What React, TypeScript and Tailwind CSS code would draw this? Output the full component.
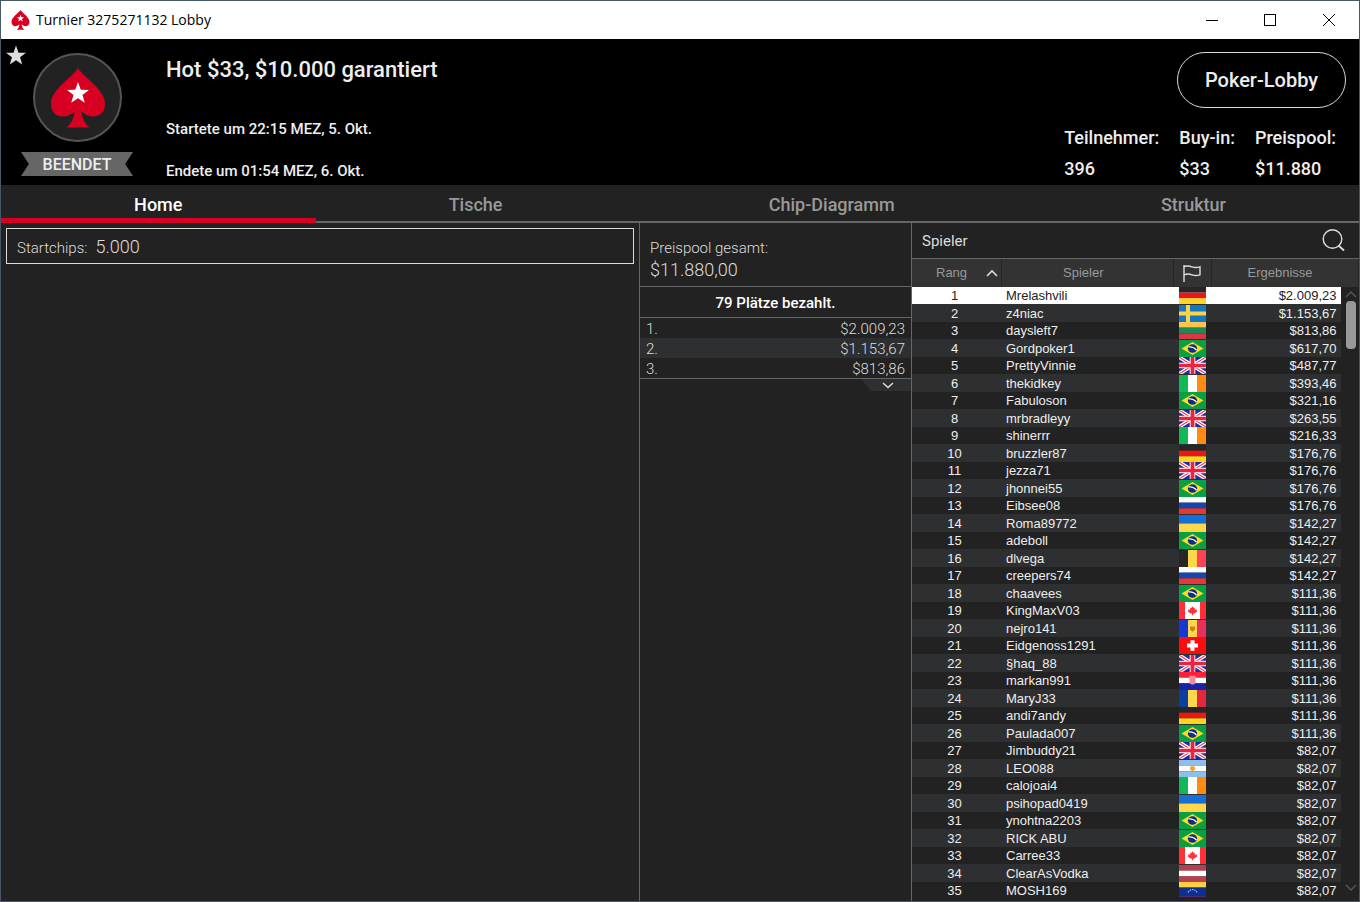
import { ReactNode } from "react";
import clsx from "clsx";

const tabs = ["Home", "Tische", "Chip-Diagramm", "Struktur"];

const facts = [
   { label: "Teilnehmer:", value: "396" },
   { label: "Buy-in:", value: "$33" },
   { label: "Preispool:", value: "$11.880" },
];

const prizes = ["$2.009,23", "$1.153,67", "$813,86"];

const players: [string, string, string][] = [
   ["Mrelashvili", "de", "$2.009,23"],
   ["z4niac", "se", "$1.153,67"],
   ["daysleft7", "lt", "$813,86"],
   ["Gordpoker1", "br", "$617,70"],
   ["PrettyVinnie", "gb", "$487,77"],
   ["thekidkey", "ie", "$393,46"],
   ["Fabuloson", "br", "$321,16"],
   ["mrbradleyy", "gb", "$263,55"],
   ["shinerrr", "ie", "$216,33"],
   ["bruzzler87", "de", "$176,76"],
   ["jezza71", "gb", "$176,76"],
   ["jhonnei55", "br", "$176,76"],
   ["Eibsee08", "ru", "$176,76"],
   ["Roma89772", "ua", "$142,27"],
   ["adeboll", "br", "$142,27"],
   ["dlvega", "be", "$142,27"],
   ["creepers74", "ru", "$142,27"],
   ["chaavees", "br", "$111,36"],
   ["KingMaxV03", "ca", "$111,36"],
   ["nejro141", "md", "$111,36"],
   ["Eidgenoss1291", "ch", "$111,36"],
   ["§haq_88", "gb", "$111,36"],
   ["markan991", "hr", "$111,36"],
   ["MaryJ33", "ro", "$111,36"],
   ["andi7andy", "de", "$111,36"],
   ["Paulada007", "br", "$111,36"],
   ["Jimbuddy21", "gb", "$82,07"],
   ["LEO088", "ar", "$82,07"],
   ["calojoai4", "ie", "$82,07"],
   ["psihopad0419", "ua", "$82,07"],
   ["ynohtna2203", "br", "$82,07"],
   ["RICK ABU", "br", "$82,07"],
   ["Carree33", "ca", "$82,07"],
   ["ClearAsVodka", "lv", "$82,07"],
   ["MOSH169", "ve", "$82,07"],
];

const rows = (...colors: string[]) =>
   colors.map((c, i) => (
      <rect key={i} y={(i * 18) / colors.length} width="27" height={18 / colors.length} fill={c} />
   ));

const cols = (...colors: string[]) =>
   colors.map((c, i) => <rect key={i} x={i * 9} width="9" height="18" fill={c} />);

const flags: Record<string, ReactNode> = {
   de: rows("#262626", "#ee1515", "#ffd520"),
   lt: rows("#ffc44d", "#1d8a55", "#dc3545"),
   ru: rows("#ffffff", "#0f47b5", "#e53935"),
   ua: rows("#176fd6", "#ffd84a"),
   ie: cols("#10b858", "#ffffff", "#ff8a14"),
   be: cols("#262626", "#ffd84a", "#ff4357"),
   ro: cols("#0a3fa0", "#ffd84a", "#e5263f"),
   md: (
      <>
         {cols("#1338d6", "#ffd84a", "#e8305a")}
         <path d="M11 7h5v3l-2.500 2.500L11 10z" fill="#d07a2a" />
      </>
   ),
   se: (
      <>
         <rect width="27" height="18" fill="#1577bd" />
         <path d="M7 0h4v18H7zM0 7h27v4H0z" fill="#ffd24a" />
      </>
   ),
   br: (
      <>
         <rect width="27" height="18" fill="#08a045" />
         <path d="M2.500 9 13.500 2l11 7-11 7z" fill="#ffda1f" />
         <circle cx="13.500" cy="9" r="4.600" fill="#0b2f80" />
         <path d="M9.500 7.300q5-.6 8 3.400" stroke="#fff" strokeWidth="1.300" fill="none" />
      </>
   ),
   gb: (
      <>
         <rect width="27" height="18" fill="#1f2aa3" />
         <path d="m0 0 27 18M27 0 0 18" stroke="#fff" strokeWidth="3.800" />
         <path d="m0 0 27 18M27 0 0 18" stroke="#f0455a" strokeWidth="1.200" />
         <path d="M13.500 0v18M0 9h27" stroke="#fff" strokeWidth="5.600" />
         <path d="M13.500 0v18M0 9h27" stroke="#ea2340" strokeWidth="3.800" />
      </>
   ),
   ca: (
      <>
         <rect width="27" height="18" fill="#fff" />
         <path d="M0 0h6v18H0zM21 0h6v18h-6z" fill="#ff3038" />
         <path
            d="m13.500 4.500 1.300 2 1.200-.6-.3 2.500 2.300-.9-.4 1.700.9.600-3 2.500h-1.500V14h-1v-1.700h-1.500l-3-2.500.9-.6-.4-1.700 2.300.9-.3-2.500 1.200.6z"
            fill="#ff3038"
         />
      </>
   ),
   ch: (
      <>
         <rect width="27" height="18" fill="#fb0d0d" />
         <path d="M11.500 3.500h4v3.500H19v4h-3.500v3.500h-4V11H8V7h3.500z" fill="#fff" />
      </>
   ),
   hr: (
      <>
         {rows("#ff2038", "#ffffff", "#1a22a8")}
         <path d="M10.500 4h6v8q-3 3-6 0z" fill="#f58a98" />
      </>
   ),
   ar: (
      <>
         {rows("#8cc0ec", "#ffffff", "#8cc0ec")}
         <circle cx="13.500" cy="9" r="2.600" fill="#eea63a" />
      </>
   ),
   lv: rows("#b8404c", "#ffffff", "#b8404c"),
   ve: (
      <>
         {rows("#ffd044", "#0a3190", "#d02040")}
         <rect y="6" width="27" height="9.500" fill="#0a3190" />
         <path d="M9 11q4.500-6 9 0" stroke="#a9b8e8" strokeWidth="1.200" strokeDasharray="1.500 1" fill="none" />
      </>
   ),
};

function Flag({ code }: { code: string }) {
   return (
      <svg
         viewBox="0 0 27 18"
         preserveAspectRatio="none"
         className="mx-auto block h-[17px] w-[27px]"
         role="img"
         aria-label={code}
      >
         {flags[code]}
      </svg>
   );
}

const STAR = "M0-10 2.400-3.200 9.500-3.100 3.900 1.300 5.900 8.100 0 4.100-5.900 8.100-3.900 1.300-9.500-3.100-2.400-3.200z";

function Spade({ className }: { className: string }) {
   return (
      <svg viewBox="0 0 54 60" className={className} aria-hidden="true">
         <path
            d="M27 0C33 10 54 21 54 36c0 8-5 12.500-12 12.500-5 0-8.500-2-11.500-5.500.5 7 3 12.500 8 16.500h-23c5-4 7.500-9.500 8-16.500-3 3.500-6.500 5.500-11.500 5.500C5 48.500 0 44 0 36 0 21 21 10 27 0z"
            fill="#d70022"
         />
         <path d={STAR} transform="translate(27 25.500) scale(1.150)" fill="#fff" />
      </svg>
   );
}

function TitleBar() {
   return (
      <div className="flex h-[38px] items-center bg-white pl-[10px] text-black">
         <Spade className="mr-[6px] h-5 w-[19px]" />
         <h1 className="flex-1 pb-[2px] font-['Open_Sans',sans-serif] text-[14px]">Turnier 3275271132 Lobby</h1>
         <div className="flex h-full">
            <button aria-label="Minimieren" className="grid w-[58px] place-items-center">
               <svg width="12" height="12" stroke="currentColor" fill="none" shapeRendering="crispEdges">
                  <path d="M0 6.500h12" />
               </svg>
            </button>
            <button aria-label="Maximieren" className="grid w-[58px] place-items-center">
               <svg width="12" height="12" stroke="currentColor" fill="none" shapeRendering="crispEdges">
                  <path d="M.5.500h11v11H.5z" />
               </svg>
            </button>
            <button aria-label="Schließen" className="grid w-[60px] place-items-center">
               <svg width="12" height="12" stroke="currentColor" fill="none">
                  <path d="m0 0 12 12M12 0 0 12" />
               </svg>
            </button>
         </div>
      </div>
   );
}

function Header() {
   return (
      <header className="relative flex h-[146px] bg-black font-medium text-[#eee]">
         <button aria-label="Favorit" className="absolute top-[6px] left-[4px]">
            <svg width="22" height="22" viewBox="-10.500 -10.500 21 21">
               <path d={STAR} fill="#ddd" />
            </svg>
         </button>
         <div className="flex w-[165px] flex-col pt-[14px] pl-5">
            <div className="ml-3 grid size-[89px] place-items-center rounded-full border-2 border-[#555] bg-[#222]">
               <Spade className="h-[60px] w-[54px]" />
            </div>
            <span className="mt-[10px] h-[24px] w-[112px] bg-[#666] text-center text-[16px] leading-[26px] [clip-path:polygon(0_0,100%_0,93%_50%,100%_100%,0_100%,7%_50%)]">
               BEENDET
            </span>
         </div>
         <div className="flex-1 pt-[19px]">
            <h2 className="text-[22px] leading-6">Hot $33, $10.000 garantiert</h2>
            <p className="mt-[37px] text-[15px] leading-5">Startete um 22:15 MEZ, 5. Okt.</p>
            <p className="mt-[22px] text-[15px] leading-5">Endete um 01:54 MEZ, 6. Okt.</p>
         </div>
         <div className="flex flex-col items-end pt-[13px] pr-[13px]">
            <button className="h-[56px] w-[169px] rounded-full border border-[#ddd] text-[20px]">
               Poker-Lobby
            </button>
            <dl className="mt-[14px] mr-[10px] flex gap-5 text-[18px] leading-[31px]">
               {facts.map(f => (
                  <div key={f.label}>
                     <dt>{f.label}</dt>
                     <dd>{f.value}</dd>
                  </div>
               ))}
            </dl>
         </div>
      </header>
   );
}

function Tabs() {
   return (
      <nav className="flex h-[38px] text-[18px] font-medium">
         {tabs.map((tab, i) => (
            <button
               key={tab}
               className={clsx(
                  "flex-auto",
                  i === 0
                     ? "border-b-[5px] border-[#d70022] pt-[6px] text-white"
                     : "border-b-2 border-[#666] pt-[2px] text-[#999]",
               )}
            >
               {tab}
            </button>
         ))}
      </nav>
   );
}

function PrizePool() {
   return (
      <section className="w-[273px] flex-none border-x border-[#666] text-[#ddd]">
         <div className="h-[64px] border-b border-[#666] pt-[14px] pl-[10px] leading-[22px] font-light">
            <p className="text-[15px]">Preispool gesamt:</p>
            <p className="text-[18px]">$11.880,00</p>
         </div>
         <h3 className="h-[31px] border-b border-[#666] text-center text-[15px] leading-[32px] font-medium text-white">
            79 Plätze bezahlt.
         </h3>
         <ol className="border-b border-[#666] text-[15px] leading-[22px] font-light">
            {prizes.map((prize, i) => (
               <li key={prize} className="flex h-5 justify-between px-[6px] even:bg-[#2d2f31]">
                  <span>{i + 1}.</span>
                  <span>{prize}</span>
               </li>
            ))}
         </ol>
         <button
            aria-label="Mehr anzeigen"
            className="ml-auto flex h-3 w-[50px] justify-center bg-[#2d2f31] pt-[3px] pl-1 [clip-path:polygon(0_0,100%_0,100%_100%,20%_100%)]"
         >
            <svg width="12" height="7" fill="none" stroke="#ddd" strokeWidth="1.400">
               <path d="m1 1 5 4.500L11 1" />
            </svg>
         </button>
      </section>
   );
}

function PlayerList() {
   return (
      <section className="flex w-[447px] flex-none flex-col pb-1">
         <div className="flex h-[36px] items-center justify-between border-b border-[#666] pr-[14px] pl-[10px] text-[#ddd]">
            <h3 className="pt-[2px] text-[15px]">Spieler</h3>
            <button aria-label="Suchen" className="pb-[2px]">
               <svg width="23" height="24" fill="none" stroke="#ddd" strokeWidth="1.400">
                  <circle cx="10.500" cy="11" r="9.300" />
                  <path d="m16.500 17.500 5.500 5" strokeWidth="1.800" />
               </svg>
            </button>
         </div>
         <div className="relative min-h-0 flex-1 overflow-hidden font-['Liberation_Sans',Arial,sans-serif]">
            <table className="w-full table-fixed border-collapse text-[13px]">
               <colgroup>
                  <col className="w-[89px]" />
                  <col />
                  <col className="w-[38px]" />
                  <col className="w-[130px]" />
                  <col className="w-[17px]" />
               </colgroup>
               <thead className="bg-[#333] text-[#999]">
                  <tr className="h-[28px] *:border-r *:border-[#262626] *:p-0 *:font-normal">
                     <th aria-sort="ascending">
                        <button className="flex w-full items-center justify-between pr-[3px] pl-6">
                           Rang
                           <svg width="12" height="8" fill="none" stroke="#ddd" strokeWidth="1.600">
                              <path d="m1 7 5-5 5 5" />
                           </svg>
                        </button>
                     </th>
                     <th>
                        <span className="pr-2">Spieler</span>
                     </th>
                     <th aria-label="Land">
                        <svg width="18" height="17" viewBox="0 0 18 17" className="mx-auto block" fill="none" stroke="#ddd" strokeWidth="1.400">
                           <path d="M1 0v17M1 1.500q4-1 8 .3t8 0v8q-4 1.500-8 0t-8 0" />
                        </svg>
                     </th>
                     <th colSpan={2}>
                        <span className="pr-[10px]">Ergebnisse</span>
                     </th>
                  </tr>
               </thead>
               <tbody>
                  {players.map(([name, country, prize], i) => (
                     <tr
                        key={name}
                        className={clsx(
                           "leading-[17px] *:p-0 odd:h-[17px] even:h-[18px]",
                           i === 0 ? "bg-white text-[#222]" : "text-[#eee] even:bg-[#2d2f31]",
                        )}
                     >
                        <td className="text-center">
                           <span className="pr-1">{i + 1}</span>
                        </td>
                        <td>
                           <span className="pl-[5px]">{name}</span>
                        </td>
                        <td>
                           <Flag code={country} />
                        </td>
                        <td className="text-right">
                           <span className="pr-[5px]">{prize}</span>
                        </td>
                        <td className="bg-[#222]" />
                     </tr>
                  ))}
               </tbody>
            </table>
            <div className="absolute top-[28px] right-0 bottom-0 flex w-[17px] flex-col items-center pt-[3px] pb-[5px]">
               <svg width="12" height="8" fill="none" stroke="#555" strokeWidth="1.500">
                  <path d="m1 7 5-5 5 5" />
               </svg>
               <div className="mt-[3px] h-[48px] w-[10px] rounded-[4px] bg-[#999]" />
               <svg width="12" height="8" fill="none" stroke="#555" strokeWidth="1.500" className="mt-auto">
                  <path d="m1 1 5 5 5-5" />
               </svg>
            </div>
         </div>
      </section>
   );
}

export default function App() {
   return (
      <div className="flex h-screen flex-col border border-[#44586a] bg-[#222] font-[Roboto,sans-serif]">
         <TitleBar />
         <Header />
         <Tabs />
         <main className="flex min-h-0 flex-1">
            <section className="min-w-0 flex-1 px-[5px] pt-[5px]">
               <p className="flex h-[36px] items-baseline gap-2 border border-[#ddd] pl-[10px] leading-[36px] font-light text-[#ddd]">
                  <span className="text-[15px]">Startchips:</span>
                  <span className="text-[18px]">5.000</span>
               </p>
            </section>
            <PrizePool />
            <PlayerList />
         </main>
      </div>
   );
}
